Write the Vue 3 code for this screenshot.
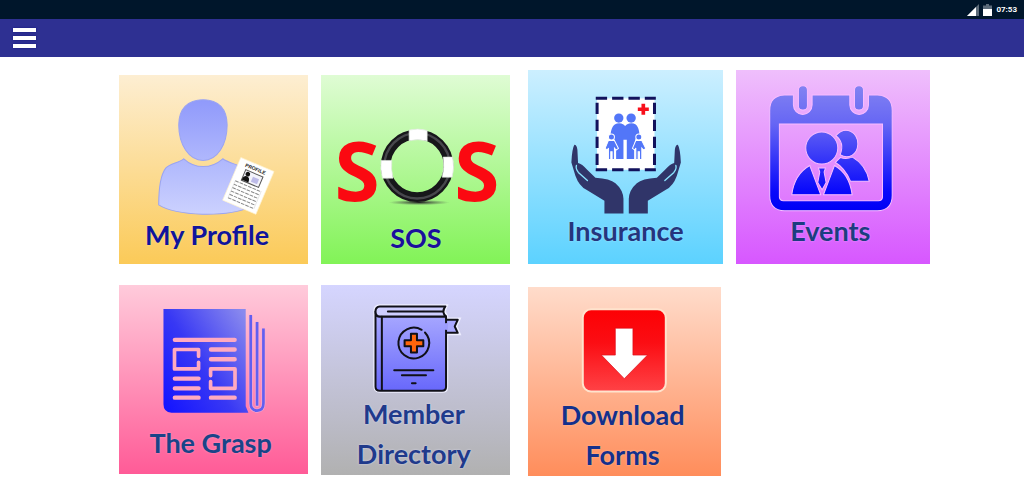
<script setup>
const time = '07:53'
const seg = [0, 1, 2, 3, 4, 5]
</script>

<template>
  <div class="page">
    <div class="status">
      <svg class="signal" viewBox="0 0 12 12" aria-hidden="true">
        <path d="M12 0V12H0Z" fill="#5c6b7a" />
        <path d="M9 3V12H0Z" fill="#fff" />
      </svg>
      <svg class="battery" viewBox="0 0 9 12" aria-hidden="true">
        <path d="M3 0H6V1.500H9V5H0V1.500H3Z" fill="#5c6b7a" />
        <path d="M0 5H9V12H0Z" fill="#fff" />
      </svg>
      <time>{{ time }}</time>
    </div>

    <header class="bar">
      <button class="menu" type="button" aria-label="Menu">
        <span></span><span></span><span></span>
      </button>
    </header>

    <nav class="tiles">
      <a href="#profile" class="tile profile">
        <svg viewBox="26 30 567 420" aria-hidden="true">
          <defs>
            <linearGradient id="person" gradientUnits="userSpaceOnUse" x1="0" y1="100" x2="0" y2="450">
              <stop offset="0" stop-color="#8f99fb" />
              <stop offset="1" stop-color="#ccd2fe" />
            </linearGradient>
          </defs>
          <g fill="url(#person)" stroke="#9aa4f2" stroke-width="3">
            <path d="M278 104C325 104 350 132 350 180C350 238 321 286 278 286C235 286 205 238 205 180C205 132 231 104 278 104Z" />
            <path d="M220 281C254 312 302 312 337 281C350 291 372 296 388 303C410 320 419 370 420 425C380 444 330 448 276 447C220 445 174 437 145 419C145 375 150 330 166 309C178 296 205 293 220 281Z" />
          </g>
          <g transform="translate(391 277) rotate(23)">
            <rect width="108" height="139" fill="#fff" stroke="#fff3cf" stroke-width="2" />
            <text x="54" y="20" text-anchor="middle" class="doc">PROFILE</text>
            <rect x="28" y="28" width="56" height="34" fill="#f3f3fa" stroke="#555" stroke-width="3" />
            <circle cx="39" cy="38" r="7" fill="#111" />
            <path d="M28 60Q29 45 39 45Q50 45 50 60Z" fill="#111" />
            <rect x="56" y="39" width="20" height="16" fill="#bdbbe8" />
            <g stroke="#888" stroke-width="3" stroke-dasharray="11 3">
              <path v-for="i in seg" :key="i" :d="`M12 ${71 + i * 11}H96`" />
            </g>
            <path d="M12 69V127M96 69V127" stroke="#bbb" stroke-width="1" />
          </g>
        </svg>
        <span class="label">My Profile</span>
      </a>

      <a href="#sos" class="tile sos">
        <svg viewBox="18 30 567 429" aria-hidden="true">
          <defs>
            <radialGradient id="shadow">
              <stop offset="0" stop-color="#222" />
              <stop offset="1" stop-color="#555" stop-opacity="0" />
            </radialGradient>
          </defs>
          <ellipse cx="312" cy="412" rx="92" ry="8" fill="url(#shadow)" />
          <circle cx="306" cy="302" r="94" fill="none" stroke="#17171a" stroke-width="29" />
          <circle cx="306" cy="302" r="98" fill="none" stroke="#47474c" stroke-width="7" />
          <g fill="#fff" stroke="#e0e8de" stroke-width="2">
            <path d="M282 195Q308 188 336 196V228Q308 220 282 227Z" />
            <path d="M198 286H230Q227 312 234 339H202Q195 312 198 286Z" />
            <path d="M384 276H412Q419 306 411 336H381Q389 306 384 276Z" />
          </g>
          <g class="big">
            <text x="126" y="407" text-anchor="middle">S</text>
            <text x="485" y="407" text-anchor="middle">S</text>
          </g>
        </svg>
        <span class="label">SOS</span>
      </a>

      <a href="#insurance" class="tile insurance">
        <svg viewBox="18 15 582 423" aria-hidden="true">
          <rect x="225" y="100" width="172" height="214" fill="#fff" />
          <g fill="none" stroke="#12125c" stroke-width="9">
            <path d="M221 100H401M221 314H401" stroke-dasharray="34 15" />
            <path d="M225 113V318M397 113V318" stroke-dasharray="34 17" />
          </g>
          <path d="M358 116H369V127H380V138H369V149H358V138H347V127H358Z" fill="#f8101c" />
          <g fill="#5276f8">
            <circle cx="290" cy="159" r="14" />
            <circle cx="327" cy="159" r="14" />
            <path d="M278 178Q291 171 304 178L309 183L314 178Q328 171 341 178C351 188 352 203 352 214L340 221L336 240V282H314V224H304V282H282V240L276 221L265 214C266 199 268 186 278 178Z" />
          </g>
          <g fill="#5276f8" stroke="#fff" stroke-width="3">
            <g id="child">
              <path d="M259 226H277L289 250L282 255L277 249V283H270V260H266V283H259V249L256 255L249 250Z" />
              <circle cx="268" cy="216" r="9" />
            </g>
            <use href="#child" x="82" />
          </g>
          <g fill="#303569">
            <g id="hand">
              <path d="M157 239Q164 239 166 254L168 294Q179 296 196 315L220 338Q264 341 280 354Q303 374 304 401V445H247V407L193 374Q171 363 160 332L148 292Q150 250 157 239Z" />
              <path d="M163 301Q160 310 169 322L196 346" fill="none" stroke="#8ae4ff" stroke-width="4" stroke-linecap="round" />
            </g>
            <use href="#hand" transform="translate(624 0) scale(-1 1)" />
          </g>
        </svg>
        <span class="label">Insurance</span>
      </a>

      <a href="#events" class="tile events">
        <svg viewBox="18 15 582 423" aria-hidden="true">
          <defs>
            <linearGradient id="cal" gradientUnits="userSpaceOnUse" x1="0" y1="65" x2="0" y2="435">
              <stop offset="0" stop-color="#8282f2" />
              <stop offset=".3" stop-color="#6666f4" />
              <stop offset=".85" stop-color="#0808fb" />
              <stop offset="1" stop-color="#0000f5" />
            </linearGradient>
          </defs>
          <g fill="url(#cal)" stroke="#f7bcff" stroke-width="3">
            <path fill-rule="evenodd" d="M163 90H190V120A28 28 0 0 0 246 120V90H359V120A28 28 0 0 0 415 120V90H442Q486 92 486 136V391Q486 435 442 437H163Q119 435 119 391V136Q119 92 163 90ZM148 177V396Q149 406 160 407H445Q456 406 457 396V177Z" />
            <rect x="205" y="62" width="27" height="73" rx="13" />
            <rect x="373" y="62" width="27" height="73" rx="13" />
            <path d="M317 212C347 179 383 202 383 237C382 269 355 284 330 269C340 244 333 224 317 212Z" />
            <path d="M331 277Q347 284 367 276Q408 300 417 348H361Q344 308 316 292Z" />
            <circle cx="275" cy="249" r="48" />
            <path d="M239 301L272 389H185Q193 327 239 301ZM313 301Q358 326 366 389H280Z" />
            <path d="M265 309H286L282 321L288 352L276 374L263 352L269 321Z" />
          </g>
        </svg>
        <span class="label">Events</span>
      </a>

      <a href="#grasp" class="tile grasp">
        <svg viewBox="26 15 566 412" aria-hidden="true">
          <defs>
            <linearGradient id="paper" x1="0" y1=".9" x2="1" y2=".1">
              <stop offset="0" stop-color="#1515ff" />
              <stop offset=".45" stop-color="#3838f4" />
              <stop offset="1" stop-color="#8a8aee" />
            </linearGradient>
          </defs>
          <path d="M159 87H405V378L413 397H183Q159 396 159 372Z" fill="url(#paper)" />
          <g fill="none" stroke="#ffaac0" stroke-width="13" stroke-linecap="round">
            <path d="M193 179H372M301 208H372M301 237H372M193 295H264M193 324H264M193 352H264M301 352H372" />
          </g>
          <g fill="none" stroke="#ffaac0" stroke-width="11" stroke-linejoin="round" stroke-linecap="round">
            <path d="M264 228V208H192V266H264V246M300 286V266H373V324H300V304" />
          </g>
          <g fill="none" stroke="#f6a9d2" stroke-width="12" stroke-linecap="round">
            <path d="M420 109V369Q420 390 439 391Q458 390 458 369V149M439 130V374" />
          </g>
          <g fill="none" stroke="#625ff0" stroke-width="8">
            <path d="M420 105V369Q420 390 439 391Q458 390 458 369V145M439 126V376" />
          </g>
        </svg>
        <span class="label">The Grasp</span>
      </a>

      <a href="#directory" class="tile directory">
        <svg viewBox="18 15 566 324" aria-hidden="true">
          <defs>
            <linearGradient id="book" x1="0" y1="0" x2="0" y2="1">
              <stop offset="0" stop-color="#aaaaff" />
              <stop offset="1" stop-color="#6868fb" />
            </linearGradient>
          </defs>
          <path d="M181 92Q181 79 194 79H390L384 94L392 109V119H428L419 139L428 159H392V320Q392 331 381 331H194Q181 331 181 318Z" fill="none" stroke="#eeeeff" stroke-width="13" />
          <g stroke="#101018" stroke-width="6" stroke-linejoin="round" stroke-linecap="round">
            <path d="M389 119H427L418 139L427 158H389" fill="#a9a9ff" />
            <path d="M181 94V319Q181 331 194 331H380Q392 331 392 319V109H193Q181 109 181 94Z" fill="url(#book)" />
            <path d="M390 79H194Q181 80 181 94Q181 109 194 109H392Q377 96 390 79Z" fill="#ceceff" />
            <path d="M218 94H381M200 110V329M237 270H354M260 285H332M290 309H301" fill="none" />
            <path d="M392 132V146" stroke="#9c9cff" stroke-width="7" />
            <path d="M319 149A46 46 0 1 0 329 157" fill="none" />
            <path d="M287 161H305V180H324V198H305V217H287V198H268V180H287Z" fill="#ff650c" />
          </g>
        </svg>
        <span class="label">Member<br />Directory</span>
      </a>

      <a href="#forms" class="tile forms">
        <svg viewBox="16 21 579 324" aria-hidden="true">
          <defs>
            <linearGradient id="red" x1="0" y1="0" x2="0" y2="1">
              <stop offset="0" stop-color="#fd0004" />
              <stop offset=".4" stop-color="#fb0d13" />
              <stop offset="1" stop-color="#ff4246" />
            </linearGradient>
          </defs>
          <rect x="181" y="88" width="250" height="248" rx="25" fill="url(#red)" stroke="#ffe3cd" stroke-width="6" />
          <path d="M279 145H332V226H376L306 297L237 226H279Z" fill="#fff" stroke="#d90a16" stroke-width="2" />
        </svg>
        <span class="label">Download<br />Forms</span>
      </a>
    </nav>
  </div>
</template>

<style>
body {
  background: #fff;
}
</style>

<style scoped>
.page {
  font-family: Lato, "Open Sans", sans-serif;
}
.status {
  display: flex;
  align-items: center;
  justify-content: flex-end;
  gap: 4px;
  height: 19px;
  padding-right: 7px;
  box-sizing: border-box;
  background: #00162b;
  color: #fff;
  font: bold 8px/12px Roboto, sans-serif;
}
.signal {
  width: 12px;
  height: 12px;
}
.battery {
  width: 9px;
  height: 12px;
}
.bar {
  display: flex;
  align-items: center;
  height: 38px;
  padding-left: 13px;
  box-sizing: border-box;
  background: #2e3092;
}
.menu {
  display: flex;
  flex-direction: column;
  gap: 4px;
  padding: 0;
  border: 0;
  background: none;
  cursor: pointer;
}
.menu span {
  width: 23px;
  height: 4px;
  background: #fff;
  box-shadow: 0 0 2px #10107c;
}
.tiles {
  display: grid;
  grid-template-columns: 189fr 194fr 194fr 194fr;
  column-gap: 13px;
  row-gap: 21px;
  align-items: start;
  padding: 13px 94px 24px 119px;
}
.tile {
  display: block;
  aspect-ratio: 1;
  text-decoration: none;
}
.tile svg {
  display: block;
  width: 100%;
  overflow: visible;
}
.label {
  display: block;
  text-align: center;
  font-size: 27px;
  font-weight: bold;
  line-height: 40px;
}
.doc {
  font: bold 15px "Liberation Sans", sans-serif;
  fill: #222;
}
.big {
  font: bold 246px "Open Sans", sans-serif;
  fill: #fb0911;
}
.profile {
  align-self: end;
  background: linear-gradient(#fdeed2, #fbca58);
  color: #10149c;
}
.profile .label {
  padding-right: 13px;
  text-shadow: 0 0 2px #ffe88c;
}
.sos {
  align-self: end;
  margin-right: 5px;
  background: linear-gradient(#dffcd4, #82f357);
  color: #1a109c;
}
.sos .label {
  text-shadow: 0 0 2px #b8ff98;
}
.insurance {
  background: linear-gradient(#ccefff, #5cd2ff);
  color: #25357d;
}
.insurance .label {
  text-shadow: 0 0 2px #a4e8ff;
}
.events {
  background: linear-gradient(#efbffc, #d757ff);
  color: #1c3d80;
}
.events .label {
  padding-right: 5px;
  text-shadow: 0 0 2px #f2a5ff;
}
.grasp {
  background: linear-gradient(#ffcbdb, #ff5b97);
  color: #1a4488;
}
.grasp .label {
  padding-right: 6px;
  text-shadow: 0 0 2px #ff9fc4;
}
.directory {
  margin-right: 5px;
  background: linear-gradient(#d5d5ff, #b1b1b1);
  color: #203a8b;
}
.directory .label {
  padding-right: 4px;
  text-shadow: 0 0 2px #dedef5;
}
.forms {
  aspect-ratio: 193 / 189;
  margin-top: 2px;
  margin-right: 2px;
  background: linear-gradient(#ffdccb, #ff8d5b);
  color: #14308c;
}
.forms .label {
  padding-right: 4px;
  text-shadow: 0 0 2px #ffc29c;
}
</style>
